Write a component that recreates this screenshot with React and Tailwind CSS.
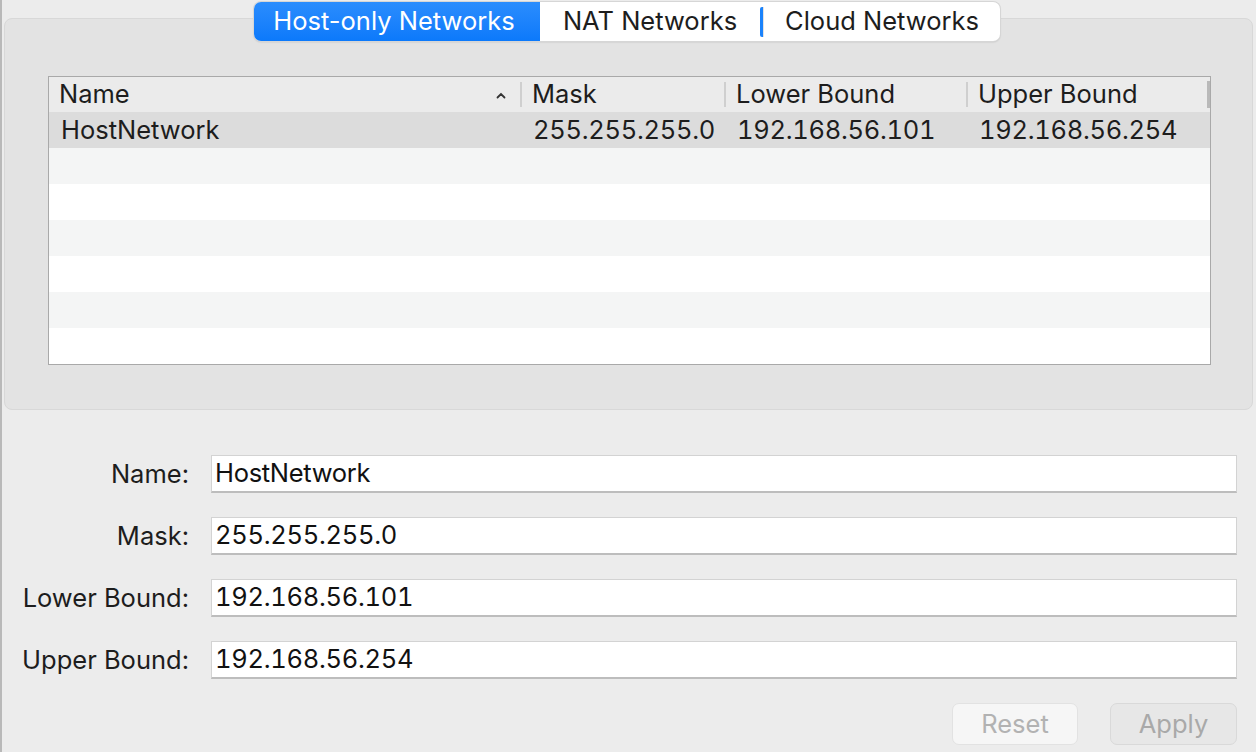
import { useState } from "react";

const networks = [
  { name: "HostNetwork", mask: "255.255.255.0", lower: "192.168.56.101", upper: "192.168.56.254" },
];

const tabs = ["Host-only Networks", "NAT Networks", "Cloud Networks"];

function Tabs({ active, onChange }) {
  return (
    <div className="relative z-10 flex justify-center">
      <div className="ml-[-4px] flex h-[39px] rounded-[7px] bg-white shadow-[0_0_0_1px_#d6d6d6,0_1px_2px_rgba(0,0,0,0.2)]">
        <button
          onClick={() => onChange(0)}
          className={
            active === 0
              ? "w-[286px] rounded-l-[7px] bg-gradient-to-b from-[#2a8dfd] to-[#0b79fb] pr-[6px] text-white"
              : "w-[286px] rounded-l-[7px] pr-[6px] text-[#1d1d1d]"
          }
        >
          {tabs[0]}
        </button>
        <button onClick={() => onChange(1)} className="w-[220px] text-[#1d1d1d]">
          {tabs[1]}
        </button>
        <div className="flex h-full items-center">
          <div className="h-[30px] w-[3px] rounded-l-[2px] bg-[#1a82fb]" />
          <div className="h-[30px] w-px bg-[#e2e2e2]" />
        </div>
        <button onClick={() => onChange(2)} className="w-[236px] rounded-r-[7px] text-[#1d1d1d]">
          {tabs[2]}
        </button>
      </div>
    </div>
  );
}

function HeaderCell({ label, className, divider = true, sort = false }) {
  return (
    <div className={"relative flex h-full items-center pl-[10px] " + className}>
      <span>{label}</span>
      {sort && (
        <svg className="absolute right-[16px] top-[15px]" width="10" height="7" viewBox="0 0 10 7">
          <path d="M1.5 5.5 L5 2 L8.5 5.5" fill="none" stroke="#333" strokeWidth="1.8" strokeLinecap="round" />
        </svg>
      )}
      {divider && <div className="absolute right-0 top-[5px] h-[25px] w-[2px] bg-[#cfcfcf]" />}
    </div>
  );
}

function Table() {
  const empty = Array.from({ length: 6 });
  return (
    <div className="h-[289px] w-[1163px] border border-[#a9a9a9] bg-white">
      <div className="flex h-[35px] bg-[#ebebeb]">
        <HeaderCell label="Name" className="w-[473px]" sort />
        <HeaderCell label="Mask" className="w-[204px]" />
        <HeaderCell label="Lower Bound" className="w-[242px]" />
        <div className="relative flex h-full w-[242px] items-center pl-[10px]">
          <span>Upper Bound</span>
          <div className="absolute right-0 top-[4px] h-[27px] w-[3px] bg-[#b9b9b9]" />
        </div>
      </div>
      {networks.map((n) => (
        <div key={n.name} className="flex h-[36px] items-center bg-[#dcdcdc]">
          <div className="w-[473px] pl-[12px]">{n.name}</div>
          <div className="w-[204px] pl-[11px] tracking-[-0.3px] tabular-nums">{n.mask}</div>
          <div className="w-[242px] pl-[11px] tracking-[-0.3px] tabular-nums">{n.lower}</div>
          <div className="w-[242px] pl-[11px] tracking-[-0.3px] tabular-nums">{n.upper}</div>
        </div>
      ))}
      {empty.map((_, i) => (
        <div key={i} className={i % 2 === 0 ? "h-[36px] bg-[#f4f5f5]" : "h-[36px] bg-white"} />
      ))}
    </div>
  );
}

function Field({ label, value }) {
  return (
    <div className="flex h-[38px] items-center">
      <div className="w-[187px] text-right">{label}</div>
      <input
        defaultValue={value}
        className="ml-[22px] mr-[19px] h-[38px] flex-1 border border-[#d3d3d3] border-b-[2px] border-b-[#bdbdbd] bg-white px-[3px] text-[#111] tracking-[-0.3px] tabular-nums outline-none"
      />
    </div>
  );
}

export default function App() {
  const [tab, setTab] = useState(0);
  const n = networks[0];

  return (
    <div
      className="flex h-[752px] w-[1256px] overflow-hidden border-l-[2px] border-[#b9b9b9] bg-[#ececec] text-[25.5px] text-[#1d1d1d]"
      style={{ fontFamily: "Inter, 'Noto Sans', sans-serif" }}
    >
      <div className="flex flex-1 flex-col">
        <div className="pt-[2px]">
          <Tabs active={tab} onChange={setTab} />
        </div>

        <div className="ml-[2px] mr-[3px] mt-[-23px] rounded-[8px] border border-[#d8d8d8] bg-[#e3e3e3] pb-[44px] pl-[43px] pt-[57px]">
          <Table />
        </div>

        <div className="mt-[45px] flex flex-col gap-[24px]">
          <Field label="Name:" value={n.name} />
          <Field label="Mask:" value={n.mask} />
          <Field label="Lower Bound:" value={n.lower} />
          <Field label="Upper Bound:" value={n.upper} />
        </div>

        <div className="mr-[19px] mt-[24px] flex justify-end gap-[32px]">
          <button className="h-[42px] w-[126px] rounded-[7px] border border-[#e2e2e2] bg-[#f6f6f6] text-[#b2b2b2]">
            Reset
          </button>
          <button className="h-[42px] w-[127px] rounded-[7px] border border-[#d9d9d9] bg-[#e7e7e7] text-[#a9a9a9]">
            Apply
          </button>
        </div>
      </div>
    </div>
  );
}
